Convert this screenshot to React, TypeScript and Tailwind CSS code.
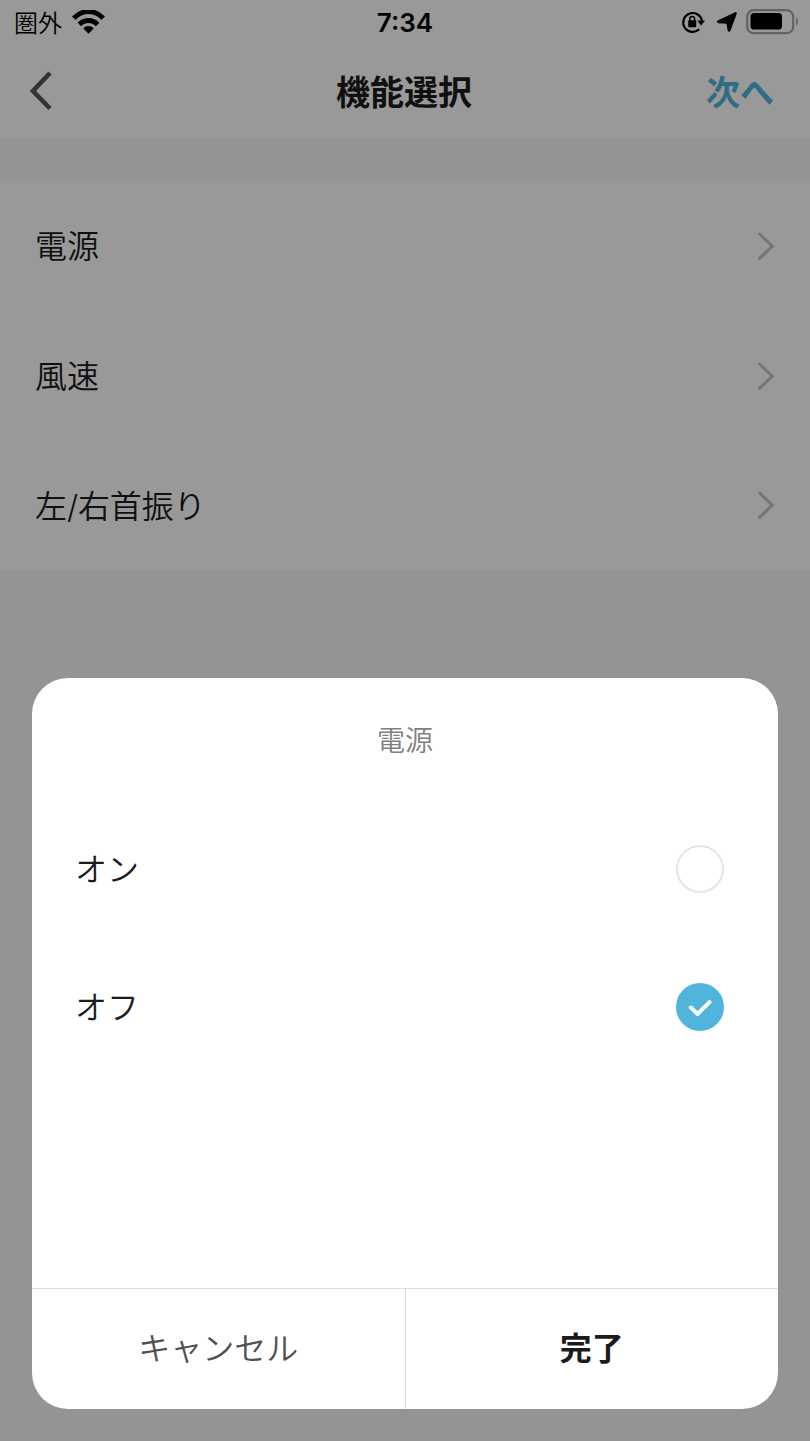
import { useState } from "react";

const FUNCTIONS = ["電源", "風速", "左/右首振り"];
const OPTIONS = ["オン", "オフ"];

export default function App() {
  const [selected, setSelected] = useState("オフ");

  return (
    <main lang="ja" className="relative flex h-[1441px] w-[810px] flex-col overflow-hidden bg-[#f7f7f7] font-['Noto_Sans_CJK_JP',sans-serif] text-[#1b1b1b]">
      <StatusBar />

      <header className="grid h-[94px] grid-cols-3 items-center bg-white pr-[31px] pl-[29px]">
        <button aria-label="戻る" className="text-[#555]">
          <svg width="24" height="40" viewBox="0 0 24 40" fill="none" stroke="currentColor" strokeWidth="4.6">
            <path d="M21 2 4 20 21 37.5" />
          </svg>
        </button>
        <h1 className="pb-px text-center text-[34px] leading-[48px] font-bold">機能選択</h1>
        <button className="justify-self-end pr-[5px] text-[34px] leading-[48px] font-bold text-[#50b4dc]">次へ</button>
      </header>

      <ul className="mt-[43px] bg-white">
        {FUNCTIONS.map((f) => (
          <li key={f} className="flex h-[129.8px] items-center justify-between pr-[35px] pl-[35px] text-[32px] font-[350]">
            <span className="pt-[3px] font-['Inter','Noto_Sans_CJK_JP',sans-serif] leading-[48px] tracking-[-0.1px]">{f}</span>
            <svg width="18" height="30" viewBox="0 0 18 30" fill="none" stroke="#c4c4c4" strokeWidth="3" strokeLinecap="round">
              <path d="M2.6 3 15.3 15.2 2.6 27.4" />
            </svg>
          </li>
        ))}
      </ul>

      <div className="absolute inset-0 flex items-end bg-black/40 px-8 pb-8">
        <section role="dialog" className="flex h-[731px] w-full flex-col overflow-hidden rounded-[36px] bg-white">
          <h2 className="flex h-[121.5px] items-center justify-center text-[28px] font-[350] text-[#808080]">電源</h2>
          <div className="flex-1">
            {OPTIONS.map((o) => (
              <button
                key={o}
                onClick={() => setSelected(o)}
                className="flex h-[138px] w-full items-center justify-between pr-[54px] pl-[43px] text-[32px] font-[350]"
              >
                <span className="pb-[3px]">{o}</span>
                <Radio checked={o === selected} />
              </button>
            ))}
          </div>
          <footer className="flex h-[121px] border-t border-[#dedede] text-[32px]">
            <button className="flex-1 border-r border-[#dedede] pb-1.5 font-[350] text-[#505050]">キャンセル</button>
            <button className="flex-1 pb-1.5 font-bold">完了</button>
          </footer>
        </section>
      </div>
    </main>
  );
}

function Radio({ checked }: { checked: boolean }) {
  if (!checked) return <span className="size-12 rounded-full border-2 border-[#e6e6e6]" />;
  return (
    <span className="flex size-12 items-center justify-center rounded-full bg-[#50b4dc]">
      <svg width="24" height="18" viewBox="0 0 24 18" fill="none" stroke="white" strokeWidth="4" strokeLinecap="round">
        <path d="M2.8 9.5 9.6 16 21.5 4.2" />
      </svg>
    </span>
  );
}

function StatusBar() {
  return (
    <div className="grid h-11 grid-cols-3 items-center bg-white text-black">
      <div className="flex items-center gap-2.5 pl-3.5">
        <span className="text-2xl leading-none font-[350]">圏外</span>
        <svg width="33" height="24" viewBox="0 0 33 24" fill="none" stroke="currentColor">
          <path d="M1.8 8.2C10-.6 23-.6 31.2 8.2" strokeWidth="5" />
          <path d="M7.4 14.4c5-5.2 13.2-5.2 18.2 0" strokeWidth="5" />
          <path d="M11.3 18.4c3-3.2 7.4-3.2 10.4 0l-5.2 5.3Z" fill="currentColor" stroke="none" />
        </svg>
      </div>
      <span className="pt-0.5 text-center font-['Inter',sans-serif] text-[26px] leading-none font-semibold">7:34</span>
      <div className="flex items-center justify-end pr-3">
        {/* rotation lock */}
        <svg width="24" height="24" viewBox="0 0 24 24" fill="none" stroke="currentColor" className="mr-3">
          <path d="M18.2 19.2A9.4 9.4 0 1 1 20.9 10.8" strokeWidth="2.2" />
          <path d="M16.2 10.4h7.8l-3.9 5.2Z" fill="currentColor" stroke="none" />
          <rect x="7.2" y="10.2" width="8" height="7" rx="1" fill="currentColor" stroke="none" />
          <path d="M8.8 11V8.8a2.4 2.4 0 0 1 4.8 0v2" strokeWidth="1.5" />
        </svg>
        <svg width="20" height="20" viewBox="0 0 20 20" fill="currentColor" stroke="currentColor" strokeWidth="1.6" strokeLinejoin="round" className="mr-[9px]">
          <path d="M1 9.2 18.4 1Q19.2.7 18.9 1.6L12.6 18.6Q12 19.4 11.5 18.6L10.2 11 1.3 10.4Q.5 10 1 9.2Z" />
        </svg>
        <svg width="52" height="26" viewBox="0 0 52 26" fill="none">
          <rect x="1.2" y="1.2" width="46" height="23" rx="6.5" stroke="#a6a6a6" strokeWidth="2.2" />
          <rect x="4.5" y="4" width="31.5" height="16.5" rx="3.6" fill="black" />
          <path d="M50 8q4 4 0 9Z" fill="#a6a6a6" />
        </svg>
      </div>
    </div>
  );
}
